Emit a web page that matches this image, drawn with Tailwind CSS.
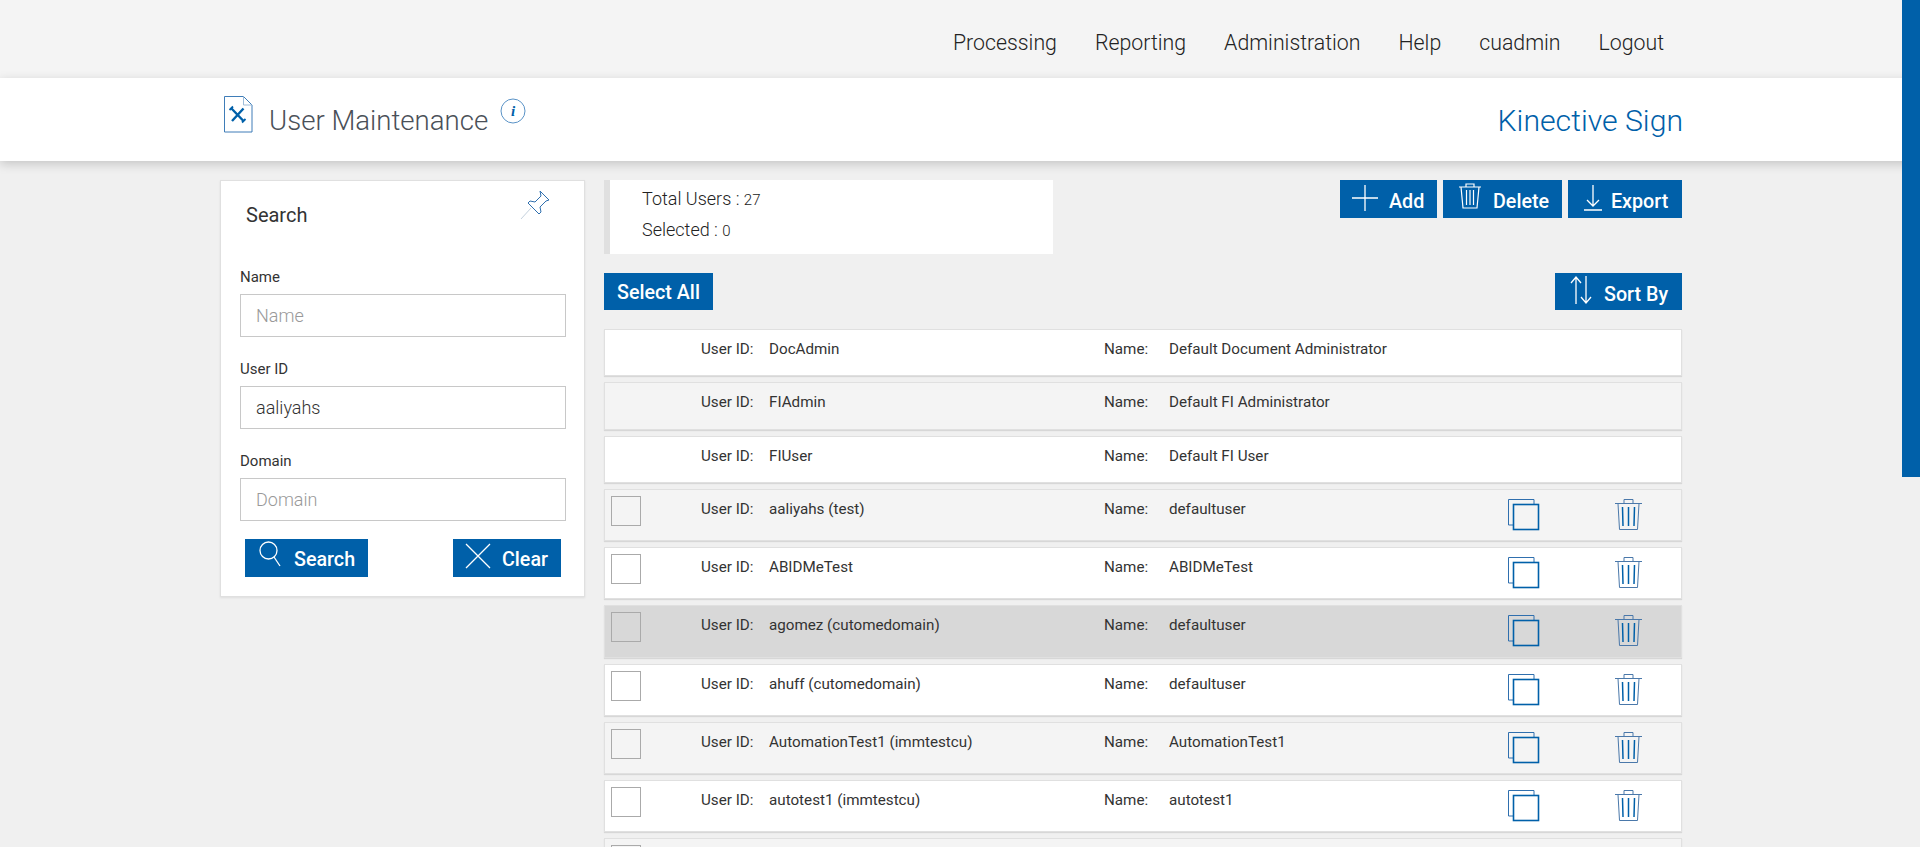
<!DOCTYPE html>
<html lang="en">
  <head>
    <meta charset="UTF-8" />
    <meta name="viewport" content="width=device-width, initial-scale=1.0" />
    <title>User Maintenance</title>
    <script src="https://cdn.jsdelivr.net/npm/@tailwindcss/browser@4"></script>
  </head>
  <body class="bg-[#f0f0f0] text-[#333] h-[847px] overflow-hidden font-['Roboto',sans-serif]">
    <!-- scrollbar thumb -->
    <div class="fixed z-10 right-0 top-0 w-[18px] h-[477px] bg-[#0060a9]"></div>

    <nav class="h-[78px] bg-[#f4f4f4] flex justify-end items-center gap-[38px] pr-[256px] pt-[7px] text-[21.300px] font-light text-[#222]">
      <a>Processing</a>
      <a>Reporting</a>
      <a>Administration</a>
      <a>Help</a>
      <a>cuadmin</a>
      <a>Logout</a>
    </nav>

    <header class="relative h-[83px] bg-white shadow-[0_3px_10px_rgba(0,0,0,0.18)] flex items-center justify-between pl-[224px] pr-[237px]">
      <div class="flex items-start">
        <svg class="w-[29px] h-[37px] mt-[-6px]" viewBox="0 0 29 37" fill="none">
          <path d="M.5.5h19l8.500 8.500V36H.5z" fill="#fff" stroke="#3f7db8"/>
          <path d="M19.500.5v8.500H28" stroke="#9dbcd9"/>
          <path d="M7.500 12.500l12 12.500M19.500 12.500L8 25" stroke="#0060a9" stroke-width="2.400"/>
          <path d="M5.500 14l3.500-3.500M18 26.500l3.500-3.500" stroke="#0060a9" stroke-width="1.800"/>
        </svg>
        <h1 class="ml-[16px] text-[27.600px] leading-[32px] font-light text-[#4a5058] mt-[3px]">User Maintenance</h1>
        <svg class="ml-[12px] mt-[-4px] w-[26px] h-[26px]" viewBox="0 0 26 26" fill="none">
          <circle cx="13" cy="13" r="12" stroke="#5a93c7"/>
          <text x="13" y="18" text-anchor="middle" font-family="Liberation Serif" font-style="italic" font-weight="700" font-size="15" fill="#0060a9">i</text>
        </svg>
      </div>
      <div class="text-[30.200px] font-light text-[#0060a9] mt-[2px]">Kinective Sign</div>
    </header>

    <main class="flex items-start gap-[19px] pl-[220px] pr-[238px] pt-[19px]">
      <!-- search panel -->
      <aside class="w-[365px] shrink-0 h-[417px] bg-white border border-[#e0e0e0] shadow-[0_1px_2px_rgba(0,0,0,0.08)] pl-[19px] pr-[18px]">
        <div class="flex justify-between h-[55px] pl-[6px] pr-[16px]">
          <h2 class="mt-[22px] text-[20px] leading-[24px] text-[#333]">Search</h2>
          <svg class="mt-[9px] w-[30px] h-[30px]" viewBox="0 0 30 30" fill="none" stroke="#2f6fae">
            <path d="M20 1l9 9-3 1-6 6 1 5-2 2-11-11 2-2 5 1 6-6z" fill="#fff"/>
            <path d="M11 18L1 29" stroke="#c5d2de"/>
          </svg>
        </div>
        <label class="block mt-[31px] text-[15px] leading-[20px] text-[#333]">Name</label>
        <input class="mt-[7px] block w-full h-[43px] border border-[#c8c8c8] px-[15px] text-[18px] font-light placeholder:text-[#999]" placeholder="Name" />
        <label class="block mt-[22px] text-[15px] leading-[20px] text-[#333]">User ID</label>
        <input class="mt-[7px] block w-full h-[43px] border border-[#c8c8c8] px-[15px] text-[18px] font-light text-[#333]" value="aaliyahs" />
        <label class="block mt-[22px] text-[15px] leading-[20px] text-[#333]">Domain</label>
        <input class="mt-[7px] block w-full h-[43px] border border-[#c8c8c8] px-[15px] text-[18px] font-light placeholder:text-[#999]" placeholder="Domain" />
        <div class="flex justify-between mt-[18px] pl-[5px] pr-[5px]">
          <button class="w-[123px] h-[38px] bg-[#0060a9] text-white text-[19.700px] font-medium flex items-center pl-[14px]">
            <svg class="w-[22px] h-[26px] mr-[13px] mt-[-8px]" viewBox="0 0 22 26" fill="none" stroke="#fff" stroke-width="1.300"><circle cx="9.500" cy="9.500" r="8.500"/><path d="M15 16l6 9"/></svg>
            <span class="translate-y-[2px]">Search</span>
          </button>
          <button class="w-[108px] h-[38px] bg-[#0060a9] text-white text-[19.700px] font-medium flex items-center pl-[12px]">
            <svg class="w-[26px] h-[26px] mr-[11px] mt-[-4px]" viewBox="0 0 26 26" fill="none" stroke="#fff" stroke-width="1.300"><path d="M1 1l24 24M25 1L1 25"/></svg>
            <span class="translate-y-[2px]">Clear</span>
          </button>
        </div>
      </aside>

      <section class="w-[1079px]">
        <div class="flex justify-between items-start">
          <div class="w-[449px] h-[74px] bg-white border-l-[6px] border-[#e0e0e0] pl-[32px] pt-[4px] text-[18px] font-light leading-[30px] text-[#222]">
            <div>Total Users : <span class="text-[15px]">27</span></div>
            <div>Selected : <span class="text-[15px]">0</span></div>
          </div>
          <div class="flex gap-[6px]">
            <button class="w-[97px] h-[38px] bg-[#0060a9] text-white text-[19.700px] font-medium flex items-center pl-[12px]">
              <svg class="w-[26px] h-[26px] mr-[11px] mt-[-3px]" viewBox="0 0 26 26" fill="none" stroke="#fff" stroke-width="1.300"><path d="M13 0v26M0 13h26"/></svg>
              <span class="translate-y-[3px]">Add</span>
            </button>
            <button class="w-[119px] h-[38px] bg-[#0060a9] text-white text-[19.700px] font-medium flex items-center pl-[15px]">
              <svg class="w-[24px] h-[26px] mr-[11px] mt-[-6px]" viewBox="0 0 24 26" fill="none" stroke="#fff" stroke-width="1.200"><path d="M1 4h22M8 4V1h8v3M3 4l2 21h14l2-21M8.500 7v15M12 7v15M15.500 7v15"/></svg>
              <span class="translate-y-[3px]">Delete</span>
            </button>
            <button class="w-[114px] h-[38px] bg-[#0060a9] text-white text-[19.700px] font-medium flex items-center pl-[16px]">
              <svg class="w-[18px] h-[26px] mr-[9px] mt-[-3px]" viewBox="0 0 18 26" fill="none" stroke="#fff" stroke-width="1.300"><path d="M9 0v21M3 15l6 6 6-6M0 25h18"/></svg>
              <span class="translate-y-[3px]">Export</span>
            </button>
          </div>
        </div>

        <div class="flex justify-between items-start mt-[19px]">
          <button class="w-[109px] h-[37px] pt-[2px] bg-[#0060a9] text-white text-[19.700px] font-medium">Select All</button>
          <button class="w-[127px] h-[37px] bg-[#0060a9] text-white text-[19.700px] font-medium flex items-center pl-[15px]">
            <svg class="w-[22px] h-[28px] mr-[12px] mt-[-4px]" viewBox="0 0 22 28" fill="none" stroke="#fff" stroke-width="1.300"><path d="M6 28V1M1 7l5-6 5 6M16 0v27M11 21l5 6 5-6"/></svg>
            <span class="translate-y-[3px]">Sort By</span>
          </button>
        </div>

        <div id="rows" class="mt-[19px] flex flex-col gap-[6px]"></div>
      </section>
    </main>

    <script>
      const copyIcon = `<svg class="w-[32px] h-[32px] mt-[9px]" viewBox="0 0 32 32" fill="none"><path d="M26 5.500V.5H.5v25.500H5.500" stroke="#2f6fae"/><rect x="5.500" y="5.500" width="25" height="25" stroke="#0060a9" stroke-width="1.600"/></svg>`;
      const trashIcon = `<svg class="ml-[75px] w-[27px] h-[32px] mt-[9px]" viewBox="0 0 27 32" fill="none" stroke="#4a78aa"><path d="M0 4.500h27M9 4.500V.5h9v4M3 4.500l1.500 26h18l1.500-26"/><path d="M7.500 8l.5 19M13.500 8v19M19.500 8l-.5 19" stroke="#0060a9" stroke-width="1.500"/></svg>`;

      const fixedUsers = [
        { id: 'DocAdmin', name: 'Default Document Administrator', bg: 'bg-white' },
        { id: 'FIAdmin', name: 'Default FI Administrator', bg: 'bg-[#f4f4f4]' },
        { id: 'FIUser', name: 'Default FI User', bg: 'bg-white' },
      ];
      const users = [
        { id: 'aaliyahs (test)', name: 'defaultuser', bg: 'bg-[#f4f4f4]' },
        { id: 'ABIDMeTest', name: 'ABIDMeTest', bg: 'bg-white' },
        { id: 'agomez (cutomedomain)', name: 'defaultuser', bg: 'bg-[#d8d8d8] border-[#d8d8d8]' },
        { id: 'ahuff (cutomedomain)', name: 'defaultuser', bg: 'bg-white' },
        { id: 'AutomationTest1 (immtestcu)', name: 'AutomationTest1', bg: 'bg-[#f4f4f4]' },
        { id: 'autotest1 (immtestcu)', name: 'autotest1', bg: 'bg-white' },
      ];

      const rowClass = 'flex border border-[#e0e0e0] shadow-[0_1px_1px_rgba(0,0,0,0.1)] text-[15.200px] leading-[20px] text-[#333]';
      const rows = document.getElementById('rows');

      fixedUsers.forEach(u => {
        rows.innerHTML += `
          <div class="h-[47.330px] ${rowClass} ${u.bg}">
            <div class="w-[96px]"></div>
            <div class="w-[68px] pt-[9px]">User ID:</div>
            <div class="w-[335px] pt-[9px]">${u.id}</div>
            <div class="w-[65px] pt-[9px]">Name:</div>
            <div class="pt-[9px]">${u.name}</div>
          </div>`;
      });

      users.forEach(u => {
        rows.innerHTML += `
          <div class="h-[52.200px] ${rowClass} ${u.bg}">
            <div class="w-[96px] pl-[6px] pt-[6px]"><div class="w-[30px] h-[30px] border border-[#aaa]"></div></div>
            <div class="w-[68px] pt-[9px]">User ID:</div>
            <div class="w-[335px] pt-[9px]">${u.id}</div>
            <div class="w-[65px] pt-[9px]">Name:</div>
            <div class="w-[339px] pt-[9px]">${u.name}</div>
            ${copyIcon}
            ${trashIcon}
          </div>`;
      });

      // last row is cut off by the window
      rows.innerHTML += `
        <div class="h-[52.200px] ${rowClass} bg-[#f4f4f4]">
          <div class="w-[96px] pl-[6px] pt-[6px]"><div class="w-[30px] h-[30px] border border-[#aaa]"></div></div>
        </div>`;
    </script>
  </body>
</html>
